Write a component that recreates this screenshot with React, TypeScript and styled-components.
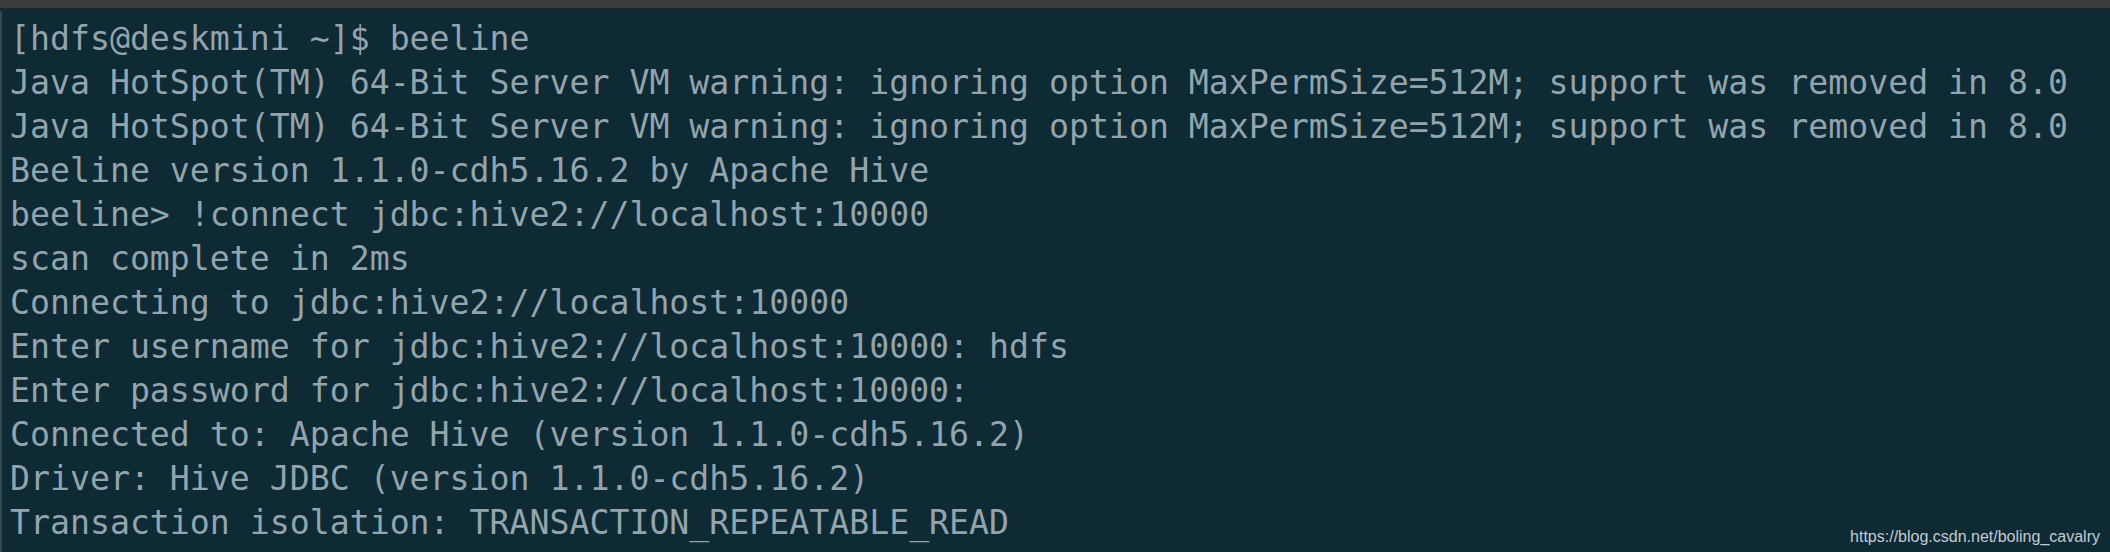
import React from "react";
import styled, { createGlobalStyle } from "styled-components";

const Global = createGlobalStyle`
  html, body { margin: 0; padding: 0; background: #0e2a35; }
  #root { width: 2110px; height: 552px; }
`;

const Window = styled.div`
  position: relative;
  width: 2110px;
  height: 552px;
  overflow: hidden;
  display: flex;
  flex-direction: column;
  background: #0e2a35;
`;

const TitleBar = styled.div`
  height: 8px;
  flex: none;
  background: #3b3b3c;
`;

const TitleShadow = styled.div`
  height: 3px;
  flex: none;
  background: #1a272c;
`;

const Terminal = styled.div`
  flex: 1;
  border-left: 2px solid #34474e;
  padding: 6px 0 0 8px;
  font-family: "DejaVu Sans Mono", "Liberation Mono", monospace;
  font-size: 33.2px;
  line-height: 44px;
  color: #93a4ac;
  white-space: pre;
  overflow: hidden;
`;

const Line = styled.div`
  height: 44px;
`;

const Watermark = styled.div`
  position: absolute;
  right: 10px;
  bottom: 6px;
  font-family: "Liberation Sans", Arial, sans-serif;
  font-size: 16px;
  line-height: 18px;
  color: #c3cbcf;
`;

const lines = [
  "[hdfs@deskmini ~]$ beeline",
  "Java HotSpot(TM) 64-Bit Server VM warning: ignoring option MaxPermSize=512M; support was removed in 8.0",
  "Java HotSpot(TM) 64-Bit Server VM warning: ignoring option MaxPermSize=512M; support was removed in 8.0",
  "Beeline version 1.1.0-cdh5.16.2 by Apache Hive",
  "beeline> !connect jdbc:hive2://localhost:10000",
  "scan complete in 2ms",
  "Connecting to jdbc:hive2://localhost:10000",
  "Enter username for jdbc:hive2://localhost:10000: hdfs",
  "Enter password for jdbc:hive2://localhost:10000:",
  "Connected to: Apache Hive (version 1.1.0-cdh5.16.2)",
  "Driver: Hive JDBC (version 1.1.0-cdh5.16.2)",
  "Transaction isolation: TRANSACTION_REPEATABLE_READ",
  "0: jdbc:hive2://localhost:10000> show databases;",
];

export default function App() {
  return (
    <>
      <Global />
      <Window>
        <TitleBar />
        <TitleShadow />
        <Terminal>
          {lines.map((l, i) => (
            <Line key={i}>{l}</Line>
          ))}
        </Terminal>
        <Watermark>https://blog.csdn.net/boling_cavalry</Watermark>
      </Window>
    </>
  );
}
